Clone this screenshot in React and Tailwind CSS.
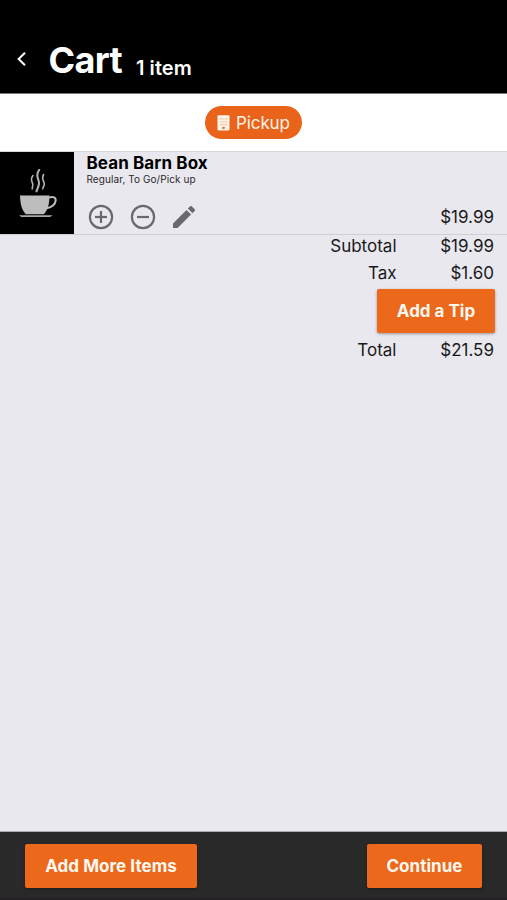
import React from 'react';

function BackIcon() {
  return (
    <svg className="h-[14px] w-[9px]" viewBox="0 0 9 14" fill="none" stroke="#fff" strokeWidth="2">
      <path d="M8 .7 1.600 7 8 13.300" />
    </svg>
  );
}

function BuildingIcon() {
  return (
    <svg className="h-[16px] w-[13px] shrink-0" viewBox="0 0 13 16">
      <rect x=".5" y=".3" width="12" height="15.2" rx="1" fill="#fff3e8" />
      <g fill="#f8cdb0">
        <path d="M3 3h2v1.600H3zM5.600 3h2v1.600h-2zM8.200 3h2v1.600h-2zM3 5.900h2v1.600H3zM5.600 5.900h2v1.600h-2zM8.200 5.900h2v1.600h-2zM3 8.800h2v1.600H3zM5.600 8.800h2v1.600h-2zM8.200 8.800h2v1.600h-2z" />
      </g>
      <path d="M5.200 12h2.600v1.800H5.200z" fill="#e9641a" />
    </svg>
  );
}

function CoffeeIcon() {
  return (
    <svg className="h-[50px] w-[40px]" viewBox="0 0 40 50">
      <g fill="none" stroke="#b0b0b0" strokeLinecap="round">
        <path d="M14 6.500c-4 5 .4 6.500-.2 9.500-.2 1.500-.4 2.500-.6 4" strokeWidth="1.600" />
        <path d="M20.200 .800c-5 6.500 .8 9.500-.3 14.500-.5 2.500-1.300 4-2.400 7" strokeWidth="2.100" />
        <path d="M24.600 5.500c-3 5 1.200 6.500.6 10-.3 1.500-.9 2.700-1.500 4.200" strokeWidth="1.600" />
      </g>
      <path d="M1 26.500h29.600c-.3 9-1.800 14.500-5.800 18.700H6.800C2.800 41 1.300 35.500 1 26.500z" fill="#bdbdbd" />
      <path d="M30.200 28.700c3.800-1.600 7-.3 6.400 3.300-.6 3.800-4.400 6.300-8.800 7.200" fill="none" stroke="#bdbdbd" strokeWidth="2" />
      <path d="M0 46.200h33.600l-2.500 1.900H2.300z" fill="#a9a9a9" />
    </svg>
  );
}

function CircleButton({ plus = false }) {
  return (
    <svg className="size-[26px]" viewBox="0 0 26 26" fill="none" stroke="#69686d" strokeWidth="2.200">
      <circle cx="13" cy="13" r="11.100" />
      <path d="M7 13h12" />
      {plus && <path d="M13 7v12" />}
    </svg>
  );
}

function PencilIcon() {
  return (
    <svg className="size-[22px]" viewBox="3 3 18 18" fill="#69686d">
      <path d="M3 17.250V21h3.750L17.810 9.940l-3.750-3.750L3 17.250zM20.710 7.040a1 1 0 0 0 0-1.410l-2.340-2.340a1 1 0 0 0-1.410 0l-1.830 1.830 3.750 3.750 1.830-1.830z" />
    </svg>
  );
}

function SummaryRow({ label, value }) {
  return (
    <div className="flex h-[27px] items-center justify-end pr-px text-right text-[17px] text-[#19191b]">
      <span>{label}</span>
      <span className="w-[97.500px]">{value}</span>
    </div>
  );
}

function Button({ children, className }) {
  return (
    <button className={`h-[44px] shrink-0 rounded-[2px] bg-[#ec681b] pt-[2px] text-[17px] font-bold text-[#fff8f0] shadow-[0_1px_3px_rgba(0,0,0,0.35)] ${className}`}>
      {children}
    </button>
  );
}

export default function App() {
  return (
    <div className="flex h-[900px] w-full flex-col overflow-hidden bg-[#e9e8ee] font-['Inter','Liberation_Sans',sans-serif] whitespace-nowrap">
      <header className="flex h-[94px] shrink-0 items-end border-b border-[#777] bg-black pl-[17px] text-white">
        <span className="mb-[27px]"><BackIcon /></span>
        <h1 className="mb-[13px] ml-[22.500px] w-[87px] text-[36px] leading-[40px] font-bold tracking-[-0.6px]">Cart</h1>
        <span className="mb-[13px] ml-[.5px] text-[20px] leading-[24px] font-semibold tracking-[0.050px]">1 item</span>
      </header>

      <div className="flex h-[58px] shrink-0 items-center justify-center border-b border-[#d6d5da] bg-white">
        <div className="flex h-[33px] w-[97px] items-center gap-[6px] rounded-full bg-[#e9641a] pl-[12px] text-[17px] tracking-[-0.1px] text-[#fff3e8]">
          <BuildingIcon />
          <span className="pt-[2px]">Pickup</span>
        </div>
      </div>

      <section className="flex h-[83px] shrink-0 border-b border-[#d0cfd4]">
        <div className="flex w-[74px] justify-center bg-black pt-[17px] pl-[4px]"><CoffeeIcon /></div>
        <div className="flex flex-1 flex-col pl-[12.500px]">
          <h2 className="text-[17px] leading-[22px] font-bold tracking-[0.1px] text-black">Bean Barn Box</h2>
          <p className="text-[10px] leading-[11px] tracking-[0.080px] text-[#29292c]">Regular, To Go/Pick up</p>
          <div className="mt-[19px] flex items-center pl-[1.500px]">
            <CircleButton plus />
            <span className="ml-[16px]"><CircleButton /></span>
            <span className="ml-[17px]"><PencilIcon /></span>
          </div>
        </div>
        <span className="mt-[54px] mr-[13px] text-[17px] leading-[22px] text-[#19191b]">$19.99</span>
      </section>

      <main className="flex flex-1 flex-col pr-[12px]">
        <div className="-mt-[2px]"><SummaryRow label="Subtotal" value="$19.99" /></div>
        <SummaryRow label="Tax" value="$1.60" />
        <Button className="mt-[2px] mb-[4px] w-[118px] self-end">Add a Tip</Button>
        <SummaryRow label="Total" value="$21.59" />
      </main>

      <footer className="flex h-[69px] shrink-0 items-start justify-between border-t border-b-2 border-t-[#aaa] border-b-[#242026] bg-[#292929] pt-[12px] pr-[25px] pl-[25px]">
        <Button className="w-[172px] tracking-[0.050px]">Add More Items</Button>
        <Button className="w-[115px] tracking-[0.050px]">Continue</Button>
      </footer>
    </div>
  );
}
